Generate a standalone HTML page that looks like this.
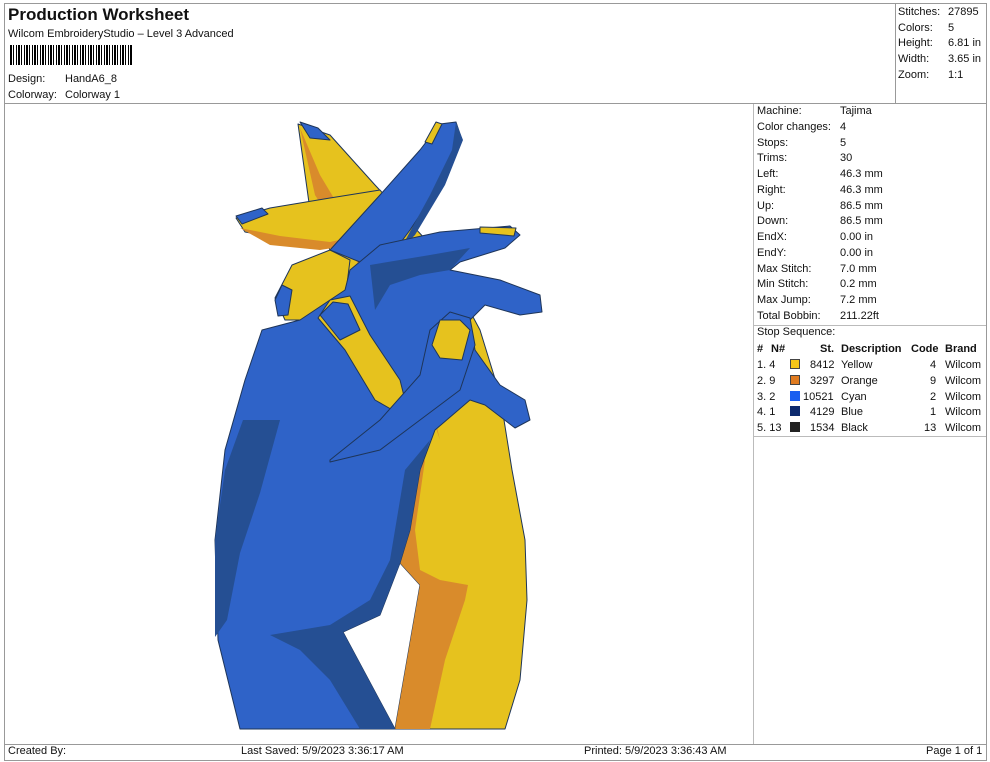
<!DOCTYPE html>
<html><head><meta charset="utf-8"><style>
*{margin:0;padding:0;box-sizing:border-box}
body{width:990px;height:762px;background:#fff;position:relative;overflow:hidden;font-family:"Liberation Sans",Arial,sans-serif;font-size:11px;color:#111}
.a{position:absolute;white-space:nowrap}
.l{position:absolute;background:#999}
.t{position:absolute;height:16px;line-height:16px;white-space:nowrap}
.sw{position:absolute;width:10px;height:10px}
</style></head><body>
<div class="l" style="left:4px;top:3px;width:983px;height:1px"></div>
<div class="l" style="left:4px;top:3px;width:1px;height:758px"></div>
<div class="l" style="left:986px;top:3px;width:1px;height:758px"></div>
<div class="l" style="left:4px;top:103px;width:983px;height:1px"></div>
<div class="l" style="left:895px;top:3px;width:1px;height:100px"></div>
<div class="l" style="left:753px;top:104px;width:1px;height:640px;background:#bbb"></div>
<div class="l" style="left:753px;top:325px;width:233px;height:1px;background:#bbb"></div>
<div class="l" style="left:753px;top:436px;width:233px;height:1px;background:#bbb"></div>
<div class="l" style="left:4px;top:744px;width:983px;height:1px"></div>
<div class="l" style="left:4px;top:760px;width:983px;height:1px"></div>

<div class="a" style="left:8px;top:5px;font-size:17px;font-weight:bold">Production Worksheet</div>
<div class="a" style="left:8px;top:28px">Wilcom EmbroideryStudio – Level 3 Advanced</div>
<div class="a" style="left:10px;top:45px;width:123px;height:20px;background:repeating-linear-gradient(90deg,#000 0 2px,#fff 2px 3px,#000 3px 4px,#fff 4px 6px,#000 6px 7px,#fff 7px 8px)"></div>
<div class="a" style="left:8px;top:73px">Design:</div><div class="a" style="left:65px;top:73px">HandA6_8</div>
<div class="a" style="left:8px;top:89px">Colorway:</div><div class="a" style="left:65px;top:89px">Colorway 1</div>

<div class="a" style="left:898px;top:5px;line-height:15.7px">Stitches:<br>Colors:<br>Height:<br>Width:<br>Zoom:</div>
<div class="a" style="left:948px;top:5px;line-height:15.7px">27895<br>5<br>6.81 in<br>3.65 in<br>1:1</div>

<div class="a" style="left:757px;top:104px;line-height:15.75px">Machine:<br>Color changes:<br>Stops:<br>Trims:<br>Left:<br>Right:<br>Up:<br>Down:<br>EndX:<br>EndY:<br>Max Stitch:<br>Min Stitch:<br>Max Jump:<br>Total Bobbin:<br>Stop Sequence:</div>
<div class="a" style="left:840px;top:104px;line-height:15.75px">Tajima<br>4<br>5<br>30<br>46.3 mm<br>46.3 mm<br>86.5 mm<br>86.5 mm<br>0.00 in<br>0.00 in<br>7.0 mm<br>0.2 mm<br>7.2 mm<br>211.22ft</div>

<div style="position:absolute;left:0;top:341px;font-weight:bold;text-decoration:underline">
<div class="t" style="left:757px">#</div><div class="t" style="left:771px">N#</div><div class="t" style="left:820px">St.</div><div class="t" style="left:841px">Description</div><div class="t" style="left:911px">Code</div><div class="t" style="left:945px">Brand</div></div>
<div style="position:absolute;left:0;top:357px">
<div class="t" style="left:757px;top:0">1. 4</div><div class="sw" style="left:790px;top:2px;background:#f5c518;border:1px solid #444"></div><div class="t" style="left:810px;top:0">8412</div><div class="t" style="left:841px;top:0">Yellow</div><div class="t" style="left:930px;top:0">4</div><div class="t" style="left:945px;top:0">Wilcom</div>
<div class="t" style="left:757px;top:16px">2. 9</div><div class="sw" style="left:790px;top:18px;background:#e07b20;border:1px solid #444"></div><div class="t" style="left:810px;top:16px">3297</div><div class="t" style="left:841px;top:16px">Orange</div><div class="t" style="left:930px;top:16px">9</div><div class="t" style="left:945px;top:16px">Wilcom</div>
<div class="t" style="left:757px;top:32px">3. 2</div><div class="sw" style="left:790px;top:34px;background:#1a5ef0"></div><div class="t" style="left:803px;top:32px">10521</div><div class="t" style="left:841px;top:32px">Cyan</div><div class="t" style="left:930px;top:32px">2</div><div class="t" style="left:945px;top:32px">Wilcom</div>
<div class="t" style="left:757px;top:47px">4. 1</div><div class="sw" style="left:790px;top:49px;background:#0d2a6e"></div><div class="t" style="left:810px;top:47px">4129</div><div class="t" style="left:841px;top:47px">Blue</div><div class="t" style="left:930px;top:47px">1</div><div class="t" style="left:945px;top:47px">Wilcom</div>
<div class="t" style="left:757px;top:63px">5. 13</div><div class="sw" style="left:790px;top:65px;background:#222"></div><div class="t" style="left:810px;top:63px">1534</div><div class="t" style="left:841px;top:63px">Black</div><div class="t" style="left:924px;top:63px">13</div><div class="t" style="left:945px;top:63px">Wilcom</div>
</div>

<div class="a" style="left:8px;top:745px">Created By:</div>
<div class="a" style="left:241px;top:745px">Last Saved: 5/9/2023 3:36:17 AM</div>
<div class="a" style="left:584px;top:745px">Printed: 5/9/2023 3:36:43 AM</div>
<div class="a" style="left:926px;top:745px">Page 1 of 1</div>

<svg class="a" style="left:0;top:0" width="990" height="762" viewBox="0 0 990 762">
<g stroke="#1e3559" stroke-width="1" stroke-linejoin="round">
<!-- yellow hand back -->
<path fill="#e6c21e" d="M298,124 L330,135 L375,185 L440,255 L480,330 L500,395 L512,470 L525,540 L527,600 L520,680 L505,729 L395,729 L420,585 L400,563 L412,520 L420,450 L400,400 L380,340 L340,270 L310,210 Z"/>
<path fill="#d98b2b" stroke="none" d="M400,563 L420,585 L395,729 L430,729 L445,660 L465,600 L468,585 L440,580 L420,570 L415,530 L425,460 L412,470 Z"/>
<path fill="#d98b2b" stroke="none" d="M300,128 L320,175 L350,225 L385,270 L400,300 L420,360 L440,440 L420,380 L390,320 L350,250 L315,195 Z"/>
<!-- yellow left finger -->
<path fill="#e6c21e" d="M236,218 L270,208 L330,198 L380,190 L400,215 L380,240 L330,245 L280,238 L245,232 Z"/>
<path fill="#d98b2b" stroke="none" d="M240,228 L280,236 L330,242 L375,232 L370,242 L320,250 L270,245 Z"/>
<path fill="#2f63c8" d="M236,216 L262,208 L268,214 L242,224 Z"/>
<!-- yellow lower finger -->
<path fill="#e6c21e" d="M275,298 L292,265 L330,250 L350,260 L345,300 L310,320 L285,320 Z"/>
<path fill="#2f63c8" d="M275,300 L282,285 L292,290 L288,315 L278,316 Z"/>
<!-- blue finger up right -->
<path fill="#2f63c8" d="M330,250 L380,195 L420,150 L440,124 L456,122 L462,140 L440,185 L410,230 L380,270 Z"/>
<path fill="#254f93" stroke="none" d="M456,122 L463,140 L445,185 L415,235 L400,250 L430,195 L452,150 Z"/>
<path fill="#e6c21e" d="M425,142 L436,122 L442,124 L432,144 Z"/>
<path fill="#2f63c8" d="M300,122 L318,128 L330,140 L310,138 Z"/>
<!-- blue hand body -->
<path fill="#2f63c8" d="M262,330 L300,320 L330,300 L345,290 L350,270 L380,245 L440,232 L510,226 L520,235 L505,248 L460,262 L450,270 L500,280 L540,295 L542,312 L520,315 L485,305 L470,320 L475,350 L500,385 L525,400 L530,420 L515,428 L485,405 L470,400 L435,430 L420,470 L410,530 L400,563 L380,615 L343,632 L395,729 L240,729 L218,640 L215,540 L225,450 L245,380 Z"/>
<path fill="#254f93" stroke="none" d="M243,420 L280,420 L260,493 L240,553 L227,620 L215,637 L215,540 L225,470 Z"/>
<path fill="#254f93" stroke="none" d="M430,440 L420,470 L410,530 L400,563 L380,615 L343,632 L395,729 L360,729 L330,680 L300,650 L270,635 L330,625 L370,600 L390,560 L400,500 L405,470 Z"/>
<path fill="#254f93" stroke="none" d="M370,265 L430,255 L470,248 L450,270 L420,275 L390,285 L375,310 Z"/>
<path fill="#e6c21e" d="M480,227 L516,228 L514,236 L480,233 Z"/>
<!-- yellow finger with blue nail -->
<path fill="#e6c21e" d="M318,318 L330,300 L350,296 L370,335 L400,380 L410,420 L375,400 L345,350 Z"/>
<path fill="#2f63c8" d="M320,315 L333,302 L348,304 L360,330 L340,340 Z"/>
<!-- blue thumb -->
<path fill="#2f63c8" d="M330,460 L380,420 L420,375 L430,330 L450,312 L470,318 L475,345 L460,390 L420,420 L380,450 L330,462 Z"/>
<path fill="#e6c21e" d="M432,345 L440,320 L460,320 L470,330 L462,360 L440,358 Z"/>
</g>
</svg>
</body></html>
